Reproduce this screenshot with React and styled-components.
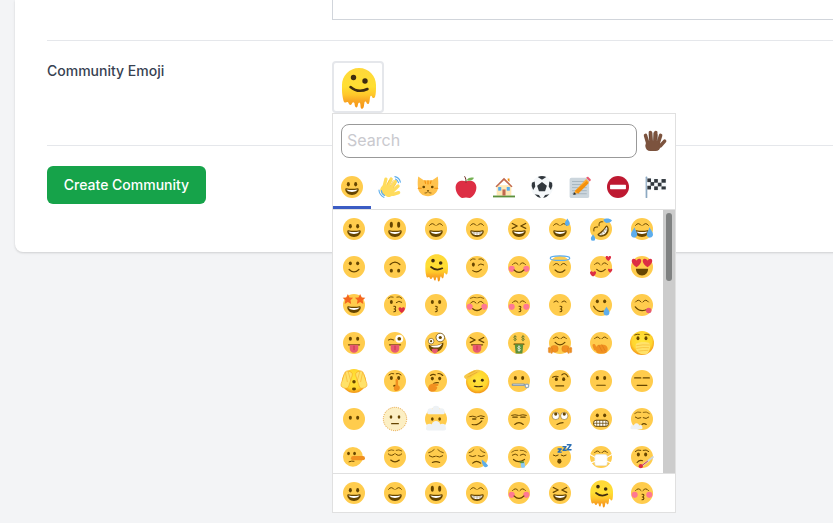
import React from 'react';
import styled, { createGlobalStyle } from 'styled-components';

const Global = createGlobalStyle`
  html, body { margin: 0; padding: 0; background: #f3f4f6; }
  body { font-family: Inter, "Liberation Sans", sans-serif; overflow: hidden; }
  * { box-sizing: border-box; }
`;

const Page = styled.div`
  width: 833px;
  height: 523px;
  overflow: hidden;
  background: #f3f4f6;
`;
const Card = styled.main`
  width: 900px;
  margin-left: 15px;
  padding: 0 0 48px 32px;
  background: #fff;
  border-radius: 0 0 8px 8px;
  box-shadow: 0 1px 3px rgba(0,0,0,.1), 0 1px 2px rgba(0,0,0,.06);
`;
const FieldRow = styled.section`
  display: grid;
  grid-template-columns: 285px 1fr;
  padding: ${p => p.$pad || '20px 0 32px'};
  border-top: ${p => (p.$first ? 'none' : '1px solid #e5e7eb')};
`;
const Label = styled.label`
  font-size: 14px;
  font-weight: 500;
  line-height: 20px;
  color: #374151;
`;
const TextArea = styled.div`
  height: 20px;
  border: 1px solid #d1d5db;
  border-top: none;
`;
const PickerAnchor = styled.div`
  position: relative;
  width: 52px;
  height: 52px;
`;
const EmojiButton = styled.button`
  width: 52px;
  height: 52px;
  padding: 0;
  display: flex;
  align-items: center;
  justify-content: center;
  background: #fff;
  border: 2px solid #e5e7eb;
  border-radius: 4px;
`;
const Footer = styled.div`
  border-top: 1px solid #e5e7eb;
  padding-top: 20px;
`;
const Submit = styled.button`
  display: block;
  width: 159px;
  height: 38px;
  padding: 0;
  border: none;
  border-radius: 6px;
  background: #16a34a;
  color: #fff;
  font: 500 14px/20px Inter, "Liberation Sans", sans-serif;
`;
const Picker = styled.div`
  position: absolute;
  left: 0;
  top: 52px;
  z-index: 2;
  width: 344px;
  height: 400px;
  background: #fff;
  border: 1px solid #e0e0e0;
  display: flex;
  flex-direction: column;
`;
const SearchRow = styled.div`
  display: flex;
  align-items: center;
  padding: 10px 8px 0;
`;
const SearchInput = styled.input`
  width: 296px;
  height: 34px;
  padding: 0 5px 2px;
  border: 1px solid #999;
  border-radius: 8px;
  outline: none;
  font: 400 16px Inter, "Liberation Sans", sans-serif;
  &::placeholder { color: #c9c9ce; opacity: 1; }
`;
const ToneSlot = styled.div`
  flex: 1;
  display: flex;
  justify-content: center;
  padding-left: 4px;
`;
const TabBar = styled.nav`
  display: flex;
  margin-top: 10px;
  height: 42px;
  border-bottom: 1px solid #e0e0e0;
`;
const Tab = styled.div`
  width: 38px;
  height: 41px;
  padding-top: 8px;
  display: flex;
  justify-content: center;
  border-bottom: 3px solid ${p => (p.$active ? '#3b5cc4' : 'transparent')};
`;
const Scroller = styled.div`
  position: relative;
  height: 263px;
  overflow: hidden;
`;
const ScrollTrack = styled.div`
  position: absolute;
  top: 0;
  right: 0;
  width: 12px;
  height: 100%;
  padding: 3px;
  background: #ccc;
`;
const ScrollThumb = styled.div`
  height: 68px;
  border-radius: 3px;
  background: #7f8181;
`;
const Grid = styled.div`
  display: grid;
  grid-template-columns: repeat(8, 41.25px);
  grid-auto-rows: 38px;
  align-content: start;
`;
const Cell = styled.div`
  display: flex;
  align-items: center;
  justify-content: center;
  height: 38px;
`;
const Recent = styled.div`
  flex: 1;
  display: grid;
  grid-template-columns: repeat(8, 41.25px);
  align-items: center;
  border-top: 1px solid #e0e0e0;
`;
const Glyph = styled.svg.attrs({ viewBox: '0 0 36 36' })`
  display: block;
  flex: none;
  width: ${p => p.$size}px;
  height: ${p => p.$size}px;
  overflow: visible;
`;

const Y = '#FFCC4D', D = '#664500', BL = '#5DADEC', OR = '#F19020', RD = '#DD2E44', PK = '#FF7892', TG = '#E75A70';
const Face = ({ c = Y }) => <circle cx="18" cy="18" r="18" fill={c} />;
const S = ({ d, c = D, w = 2 }) => <path d={d} fill="none" stroke={c} strokeWidth={w} strokeLinecap="round" strokeLinejoin="round" />;
const F = ({ d, c = D }) => <path d={d} fill={c} />;
const Eyes = ({ y = 13.5, ry = 3.5, rx = 2.5, a = 12, b = 24 }) => (
  <g fill={D}><ellipse cx={a} cy={y} rx={rx} ry={ry} /><ellipse cx={b} cy={y} rx={rx} ry={ry} /></g>
);
const Arcs = ({ y = 13, w = 1.6 }) => (
  <><S w={w} d={`M7.5 ${y + 1}Q12 ${y - 5} 16.5 ${y + 1}`} /><S w={w} d={`M19.5 ${y + 1}Q24 ${y - 5} 28.5 ${y + 1}`} /></>
);
const Brows = ({ y = 7 }) => (
  <><S w={1.4} d={`M7 ${y + 2}Q11 ${y - 2} 15 ${y}`} /><S w={1.4} d={`M21 ${y}Q25 ${y - 2} 29 ${y + 2}`} /></>
);
const Squint = () => (
  <><S w={2} d="M7 9l8 4-8 4" /><S w={2} d="M29 9l-8 4 8 4" /></>
);
const Mouth = ({ big }) => (
  <>
    <F d="M18 21c-3.6 0-6-.4-9-1-.7-.1-2 0-2 2 0 4 4.6 9 11 9s11-5 11-9c0-2-1.3-2.1-2-2-3 .6-5.4 1-9 1z" />
    <F c="#fff" d={big ? 'M9 22s3 1 9 1 9-1 9-1 -1 6-9 6-9-6-9-6z' : 'M9 22s3 1 9 1 9-1 9-1-2 4-9 4-9-4-9-4z'} />
    {big && <S w={.9} c="#9a8a66" d="M8.5 24.5h19M13 23v4M18 23v5M23 23v4" />}
  </>
);
const Smile = ({ y = 22 }) => <S w={2} d={`M10 ${y}Q18 ${y + 8} 26 ${y}`} />;
const Blush = () => <g fill={PK}><circle cx="6" cy="21" r="5" /><circle cx="30" cy="21" r="5" /></g>;
const Kiss = ({ x = 18 }) => <S w={1.8} d={`M${x - 1} 20c4-.5 4 4 .5 4.5c3.5 0 3.5 4.5-.5 4.5`} />;
const Heart = ({ x, y, s = 1, c = RD }) => (
  <path transform={`translate(${x} ${y}) scale(${s})`} fill={c} d="M0 4.5C-6 .5-5.5-4-2.8-4-1.2-4-.3-3 0-2c.3-1 1.2-2 2.8-2C5.5-4 6 .5 0 4.5z" />
);
const Star = ({ x, y, s }) => (
  <polygon transform={`translate(${x} ${y}) scale(${s})`} fill="#F4661E" points="0,-1 .29,-.36 .95,-.31 .47,.13 .59,.81 0,.45 -.59,.81 -.47,.13 -.95,-.31 -.29,-.36" />
);
const Tongue = () => (
  <>
    <S w={2} d="M9 21h18" />
    <F c={TG} d="M11 21h14v6c0 4-3 7-7 7s-7-3-7-7z" />
    <S c="#BB1A34" w={1} d="M18 23v6" />
  </>
);
const Drop = ({ x, y, s = 1 }) => (
  <path transform={`translate(${x} ${y}) scale(${s})`} fill={BL} d="M0-6C1.5-3 4-1 4 2a4 4 0 0 1-8 0C-4-1-1.5-3 0-6z" />
);
const Dollar = ({ x, y, c = '#4f6f2a' }) => (
  <S c={c} w={1.1} d={`M${x + 2.4} ${y - 2.2}c-1-1.2-4.6-1.2-4.6.9 0 2.4 4.6 1.1 4.6 3.3 0 1.9-3.6 1.9-4.6.7M${x} ${y - 4.5}v9`} />
);
const Gloss = ({ id }) => (
  <radialGradient id={id} cx="50%" cy="42%" r="55%">
    <stop offset="0" stopColor="#FFE63C" />
    <stop offset=".75" stopColor="#FFD52E" />
    <stop offset="1" stopColor="#F59E1B" />
  </radialGradient>
);
const Hand = ({ c = '#FFDC5D', t = '' }) => (
  <g transform={t} fill={c}>
    <rect x="-9.5" y="-10" width="4" height="13" rx="2" transform="rotate(-16 -7 -3)" />
    <rect x="-4.7" y="-13" width="4" height="16" rx="2" transform="rotate(-5 -2.5 -3)" />
    <rect x="0" y="-13" width="4" height="16" rx="2" transform="rotate(5 2 -3)" />
    <rect x="4.7" y="-10" width="4" height="14" rx="2" transform="rotate(17 6.500 -3)" />
    <rect x="-9" y="-2" width="17" height="12" rx="5.500" />
    <rect x="6" y="-5" width="4" height="11" rx="2" transform="rotate(42 8 4)" />
  </g>
);
const Cloud = ({ x, y, s = 1 }) => (
  <g fill="#EEF2F5" transform={`translate(${x} ${y}) scale(${s})`}>
    <circle cx="-7" cy="0" r="3.600" /><circle cx="0" cy="-2" r="4.600" /><circle cx="7" cy="0" r="3.600" /><rect x="-11" y="0" width="22" height="4" rx="2" />
  </g>
);
const Melt = () => (
  <>
    <defs>
      <linearGradient id="meltFill" x1="0" y1="0" x2="0" y2="1">
        <stop offset="0" stopColor="#FFD83A" />
        <stop offset=".45" stopColor="#FFDF33" />
        <stop offset=".66" stopColor="#FFC72A" />
        <stop offset=".8" stopColor="#F9A825" />
        <stop offset="1" stopColor="#F59311" />
      </linearGradient>
    </defs>
    <path fill="url(#meltFill)" d="M19-1C29-1 36 7 36 16c0 5 0 9-1 12-.7 1.600-2.600 1.400-3-.3-.3-1.300-1.500-1.300-1.800 0-.5 2.500-.5 5-1.200 6.500-.7 1.400-2.300 1-2.600-.6-.3-1.600-1.700-1.600-2 .2-.4 2.200-.3 3.600-1 5-.7 1.400-2.400 1.200-2.700-.4-.3-2-.2-5-1.500-5-1.200 0-1.200 2.500-1.700 4-.5 1.400-2.100 1.300-2.500-.1-.5-1.700-.2-4-1.600-4-1.300 0-1.200 1.500-2 2.200-1 .8-2.300.3-2.700-1-.3-1.200-1.200-1.800-2.200-1.200-1.300.7-2.700 0-3-1.600C1.800 25 2 21 2 16 2 7 9-1 19-1z" />
    <g fill="#3E2C10"><circle cx="13.500" cy="8.500" r="2.700" /><circle cx="25" cy="12" r="2.700" /></g>
    <S c="#3E2C10" w={2.500} d="M10.500 18Q18 24.500 27.500 20" />
  </>
);

const EMOJI = {
  grinning: <><Face /><Eyes /><Mouth /></>,
  smiley: <><Face /><Eyes y={11} ry={5} /><Mouth /></>,
  smile: <><Face /><Arcs y={11} /><Mouth /></>,
  grin: <><Face /><Arcs y={11} /><Mouth big /></>,
  laughing: <><Face /><Squint /><Mouth /></>,
  sweat: <><Face /><Arcs y={11} /><Mouth /><Drop x={30} y={7} /></>,
  rofl: <><Face /><g transform="rotate(-45 18 18)"><Arcs y={11} /><Mouth big /></g><Drop x={5} y={32} s={.9} /><path fill={BL} d="M22 3c3-3 10-3 14 1-2 3-6 4-9 4-2 0-4-2-5-5z" /></>,
  joy: <><Face /><Arcs y={11} /><Mouth /><path fill={BL} d="M0 27c0-4 3-7 6-12 1 5 3 7 4 10 1 5-3 8-6 7-2-.5-4-2-4-5zM36 27c0-4-3-7-6-12-1 5-3 7-4 10-1 5 3 8 6 7 2-.5 4-2 4-5z" /></>,
  slight: <><Face /><Eyes y={12} ry={3.200} /><Smile /></>,
  upside: <><Face /><g transform="rotate(180 18 18)"><Eyes y={12} ry={3.200} /><Smile /></g></>,
  melting: <Melt />,
  wink: <><Face /><Brows y={5} /><ellipse cx="12" cy="14" rx="2.400" ry="3.400" fill={D} /><S w={1.600} d="M20 15q4-4 9-.5" /><S w={1.800} d="M11 24q7 5 14-2" /></>,
  blush: <><Face /><Blush /><Arcs y={13} /><S d="M10 23q8 8 16 0" w={2} /></>,
  halo: <><Face /><Arcs y={14} /><S d="M10 23q8 8 16 0" w={2} /><ellipse cx="18" cy="3.500" rx="16" ry="3.600" fill="none" stroke={BL} strokeWidth="2" /></>,
  hearts: <><Face /><Arcs y={13} /><S w={1.800} d="M11 22q7 7 14 0" /><Heart x={30} y={4} s={.95} /><Heart x={5} y={29} s={1.05} /><Heart x={33} y={24} s={.75} /></>,
  heartEyes: <><Face /><F d="M8 21h20c0 6-4 11-10 11S8 27 8 21z" /><Heart x={9} y={11} s={1.650} /><Heart x={27} y={11} s={1.650} /></>,
  star: <><Face /><Mouth /><Star x={8} y={9} s={9} /><Star x={28} y={9} s={9} /></>,
  kissHeart: <><Face /><Brows y={5} /><ellipse cx="12" cy="13" rx="2.400" ry="3.200" fill={D} /><S w={1.600} d="M20 14q4-4 9-.5" /><Kiss x={17} /><Heart x={29} y={26} s={1.100} /></>,
  kissing: <><Face /><Eyes y={13} ry={3.200} /><Kiss x={18} /></>,
  relaxed: <><Face /><Blush /><S d="M7 7q6-3 10-1" w={1.200} /><S d="M19 6q4-2 10 1" w={1.200} /><Arcs y={14} /><S d="M11 24q7 6 14 0" w={2} /></>,
  kissClosed: <><Face /><Blush /><Arcs y={13} /><Kiss x={19} /></>,
  kissSmile: <><Face /><S w={1.600} d="M8 13q4-4 7 0" /><S w={1.600} d="M21 13q4-4 7 0" /><Kiss x={19} /></>,
  smileTear: <><Face /><Eyes y={12} ry={3.200} /><S w={2} d="M6 20c3 7 10 10 16 8" /><Drop x={27} y={28} s={1.200} /></>,
  yum: <><Face /><Arcs y={12} /><S w={2} d="M7 21q8 10 20 4" /><circle cx="29" cy="27" r="4.500" fill={TG} /></>,
  tongueEye: <><Face /><Eyes y={11} ry={3.200} /><Tongue /></>,
  tongueWink: <><Face /><S w={1.600} d="M7 13q4-3 9 0" /><circle cx="25" cy="11" r="6.500" fill="#fff" /><circle cx="25" cy="11" r="3" fill={D} /><Tongue /></>,
  zany: <><Face /><circle cx="25" cy="9" r="7" fill="#fff" stroke={D} strokeWidth="1.200" /><circle cx="25" cy="9" r="2.600" fill={D} /><circle cx="10" cy="15" r="4.600" fill="#fff" stroke={D} strokeWidth="1" /><circle cx="10" cy="15" r="1.800" fill={D} /><F d="M6 21c8 2 16 1 24-4 1 7-5 16-14 16-6 0-10-5-10-12z" /><F c="#fff" d="M8 22c7 1.500 14 .5 20-3-1 3-3 5-5 6-4 1-11 1-15-3z" /><F c={TG} d="M11 28c4-1 8-1 10 0 0 4-1 7-5 7s-5-4-5-7z" /></>,
  squintTongue: <><Face /><Squint /><Tongue /></>,
  money: <><Face /><Dollar x={11.500} y={10} /><Dollar x={24.500} y={10} /><S w={2} d="M10 20h16" /><F c="#5C913B" d="M11 20h14l-1.500 15h-11z" /><Dollar x={18} y={27} c="#fff" /></>,
  hugging: <><Face /><Arcs y={10} /><S w={2} d="M10 17q8 8 16 0" /><g fill={OR} stroke="#D6781B" strokeWidth=".6"><rect x="3" y="22" width="12" height="11" rx="5" /><rect x="21" y="22" width="12" height="11" rx="5" /><rect x="-1" y="25" width="3.200" height="9" rx="1.600" /><rect x="2.500" y="26" width="3.200" height="9" rx="1.600" /><rect x="34" y="25" width="3.200" height="9" rx="1.600" /><rect x="30.500" y="26" width="3.200" height="9" rx="1.600" /></g></>,
  handMouth: <><Face /><Arcs y={10} /><g fill={OR}><rect x="9" y="21" width="20" height="14" rx="7" /><rect x="5" y="20" width="5" height="11" rx="2.500" transform="rotate(-20 6 25)" /></g><path stroke="#D6781B" strokeWidth="1" d="M14 21l6 11M19 20l6 11" /></>,
  eyesHand: <><defs><Gloss id="glossA" /></defs><circle cx="18" cy="18" r="18" fill="url(#glossA)" /><Eyes y={11} ry={3} rx={2.200} /><S w={1.400} d="M7 6q4-2 7-1M22 5q4-1 7 1" /><F c="#FFE26A" d="M9 19c5-3 15-3 20-1 2 5 1 12-3 16-5 2-11 1-14-2-4-4-4-9-3-13z" /><S c="#F5B62C" w={.9} d="M10 22q9-2 19-1M10 26q9-2 18-1M13 30q8-1 14-1" /></>,
  peek: <><defs><Gloss id="glossB" /></defs><circle cx="18" cy="18" r="18" fill="url(#glossB)" /><circle cx="18" cy="19" r="2.600" fill={D} /><ellipse cx="18" cy="30" rx="3" ry="2.200" fill={D} /><g fill="#FFE26A" stroke="#F5A623" strokeWidth=".8"><rect x="1" y="3" width="12" height="26" rx="5" transform="rotate(18 7 16)" /><rect x="23" y="3" width="12" height="26" rx="5" transform="rotate(-18 29 16)" /></g><S c="#F5A623" w={.8} d="M5 5l3 14M9 3l4 14M31 5l-3 14M27 3l-4 14" /></>,
  shush: <><Face /><S w={1.600} d="M8 8q4-4 8-2M20 6q4-2 8 2" /><Eyes y={13} ry={3.200} /><ellipse cx="18" cy="26" rx="3" ry="1.800" fill={D} /><F c={OR} d="M17 33c-2-3 0-7 2-8v-9c0-2 4-2 4 0v9c3 1 4 4 2 7-2 3-6 3-8 1z" /></>,
  thinking: <><Face /><S w={1.800} d="M9 9q4-3 8-1" /><S w={1.800} d="M21 6q4-1 8 3" /><Eyes y={14} ry={3} /><S w={1.800} d="M14 22q5-2 8-1" /><F c={OR} d="M7 25c2-3 10-4 14-2 2 1 1 3-1 3l-5 .5c3 0 6 .5 5 3-2 4-4 7-10 6-5-1-6-6-3-10.500z" /></>,
  salute: <><defs><Gloss id="glossC" /></defs><circle cx="19" cy="19" r="17.500" fill="url(#glossC)" /><g fill="#3E2C10"><circle cx="14" cy="18" r="2.200" /><circle cx="26" cy="17" r="2.200" /></g><S c="#3E2C10" w={1.600} d="M14 26q6 1.500 12 0" /><F c="#F7C948" d="M-1 10c6-5 15-9 20-9 3 0 5 2 2 4-4 2-9 5-13 9-4 3-11 0-9-4z" /><S c="#E09C1A" w={.8} d="M6 7l9-4M8 10l10-5M4 12l5-2" /></>,
  zipper: <><Face /><Eyes y={13} ry={3.200} /><S c="#8899A6" w={4} d="M8 24h18" /><S c="#CCD6DD" w={1.200} d="M9 24h16" /><circle cx="31" cy="26" r="4" fill="#99AAB5" /><circle cx="31" cy="26" r="1.800" fill="#fff" /></>,
  raised: <><Face /><S w={1.800} d="M6 12q5-3 9-1" /><S w={1.800} d="M21 8q5-5 10 3" /><Eyes y={15} ry={3} /><S w={1.800} d="M11 26h13" /></>,
  neutral: <><Face /><Eyes y={13} ry={3.200} /><S w={1.800} d="M11 25h14" /></>,
  expressionless: <><Face /><S w={2} d="M6 13h10M20 13h10M10 25h16" /></>,
  noMouth: <><Face /><Eyes y={16} ry={3.200} /></>,
  dotted: <><circle cx="18" cy="18" r="17.500" fill="#FCEFC4" stroke="#E8A33D" strokeWidth="1.500" strokeDasharray="1.600 1.600" /><Eyes y={15} ry={2.600} rx={2} /><S w={2} d="M13 25h10" /></>,
  fog: <><Face /><Eyes y={18} ry={2.800} rx={2.200} /><Cloud x={18} y={5} s={1.300} /><Cloud x={18} y={31} s={1.500} /></>,
  smirk: <><Face /><S w={1.600} d="M6 14q5-2 11 1" /><S w={1.600} d="M19 14q5-3 11 0" /><S d="M11 18h5M24 17h4" w={2.200} /><S w={1.800} d="M10 27q10 2 16-6" /></>,
  unamused: <><Face /><S w={1.600} d="M6 12q5-2 11 0M19 12q5-2 11 0" /><S w={2.200} d="M8 15h7M21 15h7" /><S w={1.800} d="M11 27q7-6 14 0" /></>,
  rollEyes: <><Face /><circle cx="11" cy="13" r="6" fill="#fff" stroke={D} strokeWidth=".8" /><circle cx="25" cy="13" r="6" fill="#fff" stroke={D} strokeWidth=".8" /><circle cx="11" cy="10" r="2.600" fill={D} /><circle cx="25" cy="10" r="2.600" fill={D} /><S w={1.800} d="M13 27q5-3 10-3" /></>,
  grimace: <><Face /><Eyes y={12} ry={3.200} /><rect x="6" y="20" width="24" height="10" rx="4" fill="#fff" stroke={D} strokeWidth="1.600" /><path stroke={D} strokeWidth="1.200" d="M6 25h24M11 20v10M16 20v10M21 20v10M26 20v10" /></>,
  exhale: <><Face /><S d="M6 9q5-4 10-2M20 7q5-2 10 2" w={1.200} /><S w={1.600} d="M7 15q4 4 9 1M20 16q5 3 9-1" /><S w={1.800} d="M18 27q3-3 7 0" /><Cloud x={9} y={31} s={.9} /></>,
  lying: <><g transform="translate(0 1.500) scale(.9)"><Face /><Eyes y={12} ry={3.200} a={10} b={21} /><S w={1.800} d="M11 27q5-2 9-1" /></g><rect x="13" y="16.500" width="23" height="7" rx="3.500" fill={OR} /></>,
  relieved: <><Face /><S d="M7 8q5-3 9-1M20 7q4-2 9 1" w={1.200} /><S w={1.600} d="M7 13q5 5 10 0M19 13q5 5 10 0" /><S w={2} d="M11 23q7 6 14 0" /></>,
  pensive: <><Face /><S w={1.400} d="M6 11q5-1 9-5M21 6q4 4 9 5" /><S w={1.600} d="M7 16q5 4 10 1M19 17q5 3 10-1" /><S w={1.800} d="M12 27q6-3 12 0" /></>,
  sleepy: <><Face /><S w={1.400} d="M5 11q5-1 8-5M23 6q3 4 8 5" /><S w={1.600} d="M6 16q5 3 10 0M20 16q5 3 10 0" /><S w={2} d="M11 28q6-6 13 0" /><F c={BL} d="M26 22c3 2 8 7 10 10-1 3-5 4-7 1-2-3-4-7-3-11z" /></>,
  drool: <><Face /><S d="M6 10q5-4 10-3M20 7q5-1 10 3" w={1.200} /><S w={1.600} d="M7 15q5-4 9 0M20 15q5-4 9 0" /><S w={2} d="M9 22q8 7 18 0" /><F c="#8CCAF7" d="M21 26h6l1 8c0 2-6 3-7 0z" /><F c="#5C913B" d="M19 25h7v3h-7z" /></>,
  sleeping: <><Face /><S w={1.600} d="M7 15q4 3 8 0M20 15q4 3 8 0" /><ellipse cx="17" cy="25" rx="3.400" ry="4" fill={D} /><S c="#2A6FB5" w={2.400} d="M15 5h5l-5 5h5M23 1h5l-5 6h5M30 -2h6l-6 8h6" /></>,
  mask: <><Face /><Arcs y={10} /><rect x="8" y="14" width="20" height="18" rx="3" fill="#fff" stroke="#E1E8ED" /><path stroke="#fff" strokeWidth="1.800" d="M0 14l9 5M36 14l-9 5M0 28l9-3M36 28l-9-3" /></>,
  thermo: <><Face /><S w={1.600} d="M7 9q4-4 9-2M20 7q5-2 9 2" /><Eyes y={14} ry={3.200} /><S w={1.800} d="M10 27q4-5 9-3" /><S c="#CCD6DD" w={3} d="M17 33L36 18" /><S c={RD} w={1.600} d="M18 32L27 25" /><circle cx="16" cy="33" r="3.500" fill={RD} /></>,
  wave: <><g transform="translate(16.500 20) rotate(30) scale(1.350)"><Hand c="#FFDC5D" /><path stroke="#F5B62C" strokeWidth=".7" d="M-4.600-2v-7M-.2-2v-9M4.300-2v-7" /></g><S c={BL} w={1.800} d="M26 1c5 1 8 4 9 9M27 5c3 1 4 3 5 6M0 23c0 5 3 9 8 12M4 24c0 3 2 6 5 8" /></>,
  cat: <><F c="#FFC24D" d="M2 1l9 6h14l9-6c1 6 1 12 .5 17-.5 10-8 15-16.500 15S2 28 1.500 18C1 13 1 7 2 1z" /><S c="#F4900C" w={1.800} d="M18 8v5M13 8l1 4M23 8l-1 4M2 20h5M29 20h5" /><g fill={D}><circle cx="11" cy="18" r="2.200" /><circle cx="25" cy="18" r="2.200" /></g><F c={D} d="M16 23h4l-2 2z" /><S w={1.200} d="M13 28q3 1 5-3q2 4 5 3" /></>,
  apple: <><F c={RD} d="M18 9c-5-3-17-2-17 10 0 9 7 17 11 17 2 0 4-1 6-1s4 1 6 1c4 0 11-8 11-17C35 7 23 6 18 9z" /><F c="#77B255" d="M19 7c3-5 8-5 12-4-1 4-8 6-12 4z" /><S c="#662113" w={1.600} d="M18 10c0-3 0-6-2-9" /></>,
  house: <><F c="#FFE8B6" d="M6 15h24v17H6z" /><F c="#C1694F" d="M18 3L4 17l2 1.500L18 7l12 11.500 2-1.500z" /><F c="#F4900C" d="M24 4h3v6l-3-3z" /><F c="#5C913B" d="M0 32h36v3H0z" /><g fill="#55ACEE"><rect x="8.500" y="18" width="5" height="6" /><rect x="22.500" y="18" width="5" height="6" /></g><rect x="15.500" y="22" width="5" height="10" fill="#C1694F" /></>,
  soccer: <><circle cx="18" cy="18" r="18" fill="#F5F8FA" /><F c="#31373D" d="M18 10l8 6-3 9H13l-3-9zM11 1.500q7-3 14 0L18 6zM1.500 11L6 9l1 8-3.500 6Q-.5 17 1.500 11zM34.500 11L30 9l-1 8 3.500 6q4-6 2-12zM6 30l7 1 3 5q-6-1-10-6zM30 30l-7 1-3 5q6-1 10-6z" /></>,
  memo: <><rect x="1" y="3" width="32" height="33" rx="3" fill="#CCD6DD" /><path stroke="#99AAB5" strokeWidth="1.200" d="M5 9h24M5 14h24M5 19h24M5 24h24M5 29h24" /><F c="#FFAC33" d="M10 24L28 5l5 5-19 18-6 2z" /><F c="#F4900C" d="M10 24l5 5 17-17-3-4z" /><F c="#EA596E" d="M28 3c2-2 3-2 4-1l3 3c1 1 1 2-1 4z" /><F c="#292F33" d="M8 26l-1 5 5-1z" /></>,
  noEntry: <><circle cx="18" cy="18" r="18" fill="#BE1931" /><rect x="5" y="14.500" width="26" height="7" rx="1" fill="#fff" /></>,
  flag: <><rect x="1" y="1" width="2.800" height="35" rx="1" fill="#8CA9C2" /><F c="#F5F8FA" d="M3 4c10-3 20 4 32 0v18c-12 4-22-3-32 0z" /><g fill="#31373D"><rect x="3.800" y="4" width="6" height="6" /><rect x="15" y="5" width="6" height="6" /><rect x="27" y="5" width="7" height="6" /><rect x="9" y="10" width="6" height="6" /><rect x="21" y="11" width="6" height="6" /><rect x="3.800" y="16" width="6" height="6" /><rect x="15" y="17" width="6" height="6" /><rect x="27" y="17" width="7" height="5" /></g></>,
  tone: <g transform="translate(17 20) scale(1.450)"><Hand c="#7C533E" /><path stroke="#5E3F2E" strokeWidth=".8" d="M-4.600-2v-7M-.2-2v-9M4.300-2v-7" /></g>,
};

const LARGE = new Set(['melting', 'eyesHand', 'peek', 'salute', 'dotted']);
const Emoji = ({ name, size = 22 }) => <Glyph $size={size}>{EMOJI[name]}</Glyph>;
const Pick = ({ name }) => <Cell><Emoji name={name} size={LARGE.has(name) ? 24 : 22} /></Cell>;

const TABS = ['grinning', 'wave', 'cat', 'apple', 'house', 'soccer', 'memo', 'noEntry', 'flag'];
const ALL = [
  'grinning', 'smiley', 'smile', 'grin', 'laughing', 'sweat', 'rofl', 'joy',
  'slight', 'upside', 'melting', 'wink', 'blush', 'halo', 'hearts', 'heartEyes',
  'star', 'kissHeart', 'kissing', 'relaxed', 'kissClosed', 'kissSmile', 'smileTear', 'yum',
  'tongueEye', 'tongueWink', 'zany', 'squintTongue', 'money', 'hugging', 'handMouth', 'eyesHand',
  'peek', 'shush', 'thinking', 'salute', 'zipper', 'raised', 'neutral', 'expressionless',
  'noMouth', 'dotted', 'fog', 'smirk', 'unamused', 'rollEyes', 'grimace', 'exhale',
  'lying', 'relieved', 'pensive', 'sleepy', 'drool', 'sleeping', 'mask', 'thermo',
];
const RECENT = ['grinning', 'smile', 'smiley', 'grin', 'blush', 'laughing', 'melting', 'kissClosed'];

export default function App() {
  return (
    <Page>
      <Global />
      <Card>
        <FieldRow $first $pad="0 0 20px">
          <span />
          <TextArea />
        </FieldRow>
        <FieldRow>
          <Label>Community Emoji</Label>
          <PickerAnchor>
            <EmojiButton type="button"><Emoji name="melting" size={36} /></EmojiButton>
            <Picker>
              <SearchRow>
                <SearchInput placeholder="Search" />
                <ToneSlot><Emoji name="tone" /></ToneSlot>
              </SearchRow>
              <TabBar>
                {TABS.map((t, i) => <Tab key={t} $active={i === 0}><Emoji name={t} /></Tab>)}
              </TabBar>
              <Scroller>
                <Grid>
                  {ALL.map(n => <Pick key={n} name={n} />)}
                </Grid>
                <ScrollTrack><ScrollThumb /></ScrollTrack>
              </Scroller>
              <Recent>
                {RECENT.map(n => <Pick key={n} name={n} />)}
              </Recent>
            </Picker>
          </PickerAnchor>
        </FieldRow>
        <Footer>
          <Submit type="button">Create Community</Submit>
        </Footer>
      </Card>
    </Page>
  );
}
